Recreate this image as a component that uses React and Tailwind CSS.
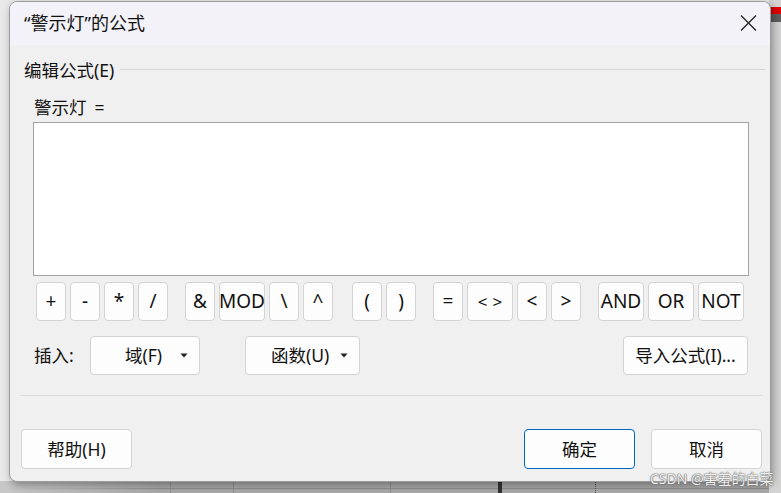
import React from "react";

const font = "font-['Noto_Sans','Noto_Sans_CJK_SC',sans-serif]";

const OpBtn = ({ label, wide }) => (
  <button
    className={`${wide ? "w-[46px]" : "w-[30px]"} h-[39px] flex items-center justify-center rounded-[4px] border border-[#d3d3d3] bg-[#fdfdfd] text-[19px] leading-none text-[#111] pb-[1px]`}
  >
    {label === "<>" ? (
      <span className="flex gap-[5px] text-[17px]">
        <span>&lt;</span>
        <span>&gt;</span>
      </span>
    ) : (
      label
    )}
  </button>
);

const Group = ({ items, className = "" }) => (
  <div className={`flex gap-[4px] ${className}`}>
    {items.map((it) => (
      <OpBtn key={it} label={it} wide={it === "MOD" || it === "<>" || it === "AND" || it === "OR" || it === "NOT"} />
    ))}
  </div>
);

const Arrow = () => (
  <svg width="8" height="5" viewBox="0 0 8 5" className="ml-auto">
    <path d="M0.5 0.5 L7.5 0.5 L4 4.5 Z" fill="#222" />
  </svg>
);

const Btn = ({ children, primary, className = "" }) => (
  <button
    className={`h-[40px] flex items-center justify-center rounded-[4px] border ${
      primary ? "border-[#0067c0]" : "border-[#d3d3d3]"
    } bg-[#fdfdfd] text-[17.5px] text-[#111] ${className}`}
  >
    {children}
  </button>
);

export default function App() {
  return (
    <div className={`relative w-[781px] h-[493px] overflow-hidden bg-[#e9e9e9] ${font}`}>
      {/* spreadsheet behind */}
      <div className="absolute left-0 right-0 bottom-0 h-[12px] bg-[#a9a9a9]">
        <div className="absolute left-0 right-0 top-[7px] h-px bg-[#8f8f8f]" />
        <div className="absolute top-0 bottom-0 left-[170px] w-px bg-[#8f8f8f]" />
        <div className="absolute top-0 bottom-0 left-[233px] w-px bg-[#8f8f8f]" />
        <div className="absolute top-0 bottom-0 left-[390px] w-px bg-[#8f8f8f]" />
        <div className="absolute top-0 bottom-0 left-[498px] w-[4px] bg-[#333]" />
        <div className="absolute top-0 bottom-0 left-[595px] w-px border-l border-dotted border-[#555]" />
        <div className="absolute top-0 bottom-0 left-0 w-[160px] bg-gradient-to-r from-[#c8c8c8] to-transparent" />
      </div>
      <div className="absolute right-0 top-0 w-[12px] h-full bg-[#d4d4d4]">
        <div className="mt-[7px] h-[7px] bg-[#e00000]" />
        <div className="h-[8px] bg-[#5e5e5e]" />
      </div>

      {/* dialog */}
      <div className="relative z-10 ml-[9px] mt-[1px] w-[762px] h-[481px] rounded-[8px] border border-[#9c9c9c] bg-[#f0f0f0] shadow-[2px_3px_8px_rgba(0,0,0,0.35)] overflow-hidden flex flex-col">
        {/* title bar */}
        <div className="h-[43px] shrink-0 bg-[#f3f2f8] flex items-center pl-[14px] pr-[13px]">
          <span className="text-[18px] text-[#111] mt-[-1px]">“警示灯”的公式</span>
          <svg width="17" height="16" viewBox="0 0 17 16" className="ml-auto mt-[-2px]">
            <path d="M1 0.5 L16 15.5 M16 0.5 L1 15.5" stroke="#222" strokeWidth="1.3" />
          </svg>
        </div>

        {/* group header */}
        <div className="flex items-center pl-[14px] pr-[5px] mt-[14px] h-[22px]">
          <span className="text-[17.5px] text-[#111]">编辑公式(E)</span>
          <div className="flex-1 h-px bg-[#d6d6d6] ml-[6px] mt-[-2px]" />
        </div>

        <div className="pl-[24px] mt-[11px] h-[30px] flex items-center text-[17.5px] text-[#111]">
          警示灯<span className="ml-[8px]">=</span>
        </div>

        <div className="ml-[23px] w-[716px] h-[154px] border border-[#a3a3a3] bg-white" />

        {/* operator buttons */}
        <div className="flex gap-[17px] ml-[26px] mt-[6px]">
          <Group items={["+", "-", "*", "/"]} />
          <Group items={["&", "MOD", "\\", "^"]} />
          <Group items={["(", ")"]} className="ml-[2px]" />
          <Group items={["=", "<>", "<", ">"]} />
          <Group items={["AND", "OR", "NOT"]} />
        </div>

        {/* insert row */}
        <div className="flex items-center ml-[24px] mt-[15px] h-[39px] text-[17.5px] text-[#111]">
          <span className="w-[56px]">插入:</span>
          <button className="w-[110px] h-[39px] flex items-center rounded-[4px] border border-[#d3d3d3] bg-[#fdfdfd] pl-[34px] pr-[11px]">
            域(F)
            <Arrow />
          </button>
          <button className="ml-[45px] w-[115px] h-[39px] flex items-center rounded-[4px] border border-[#d3d3d3] bg-[#fdfdfd] pl-[25px] pr-[11px]">
            函数(U)
            <Arrow />
          </button>
          <button className="ml-[263px] w-[125px] h-[39px] flex items-center justify-center rounded-[4px] border border-[#d3d3d3] bg-[#fdfdfd]">
            导入公式(I)...
          </button>
        </div>

        <div className="ml-[11px] mr-[8px] mt-[20px] h-px bg-[#d9d9d9]" />

        {/* footer */}
        <div className="flex items-center ml-[11px] mr-[8px] mt-[33px]">
          <Btn className="w-[111px]">帮助(H)</Btn>
          <Btn primary className="w-[111px] ml-auto">确定</Btn>
          <Btn className="w-[111px] ml-[16px]">取消</Btn>
        </div>
      </div>

      <div className="absolute z-20 left-[650px] top-[472px] whitespace-nowrap text-[14px] leading-none text-white/90 [text-shadow:0_0_1px_#666,0_0_1px_#666,0_0_2px_#888]">
        CSDN @害羞的白菜
      </div>
    </div>
  );
}
